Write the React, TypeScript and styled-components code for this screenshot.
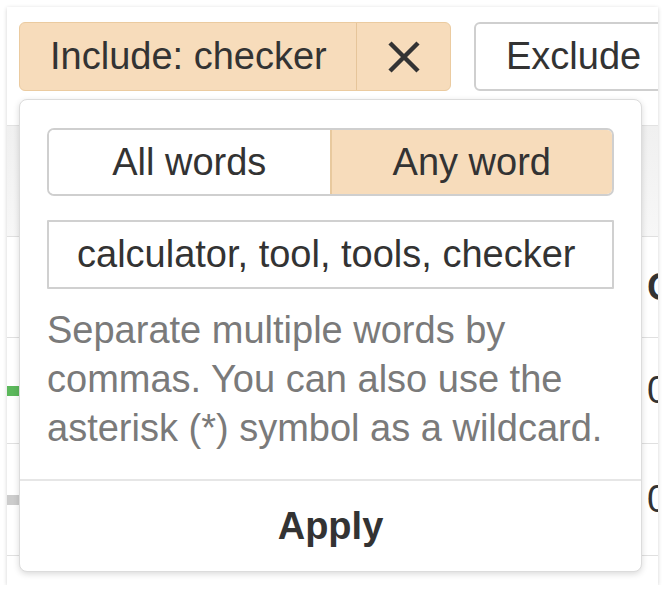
import styled, { createGlobalStyle } from "styled-components"

const GlobalStyle = createGlobalStyle`
   html, body {
      margin: 0;
      padding: 0;
      background: #ffffff;
   }
   body {
      font-family: "Liberation Sans", Arial, sans-serif;
      color: #333;
   }
`

interface Row {
   height: number
   bar?: string
   value: string
   bold?: boolean
}

const rows: Row[] = [
   { height: 100, value: "C", bold: true },
   { height: 105, bar: "#5cb85c", value: "0" },
   { height: 111, bar: "#cccccc", value: "0" },
   { height: 60, value: "" },
]

const App = () => {
   return (
      <>
         <GlobalStyle />
         <Card>
            <Toolbar>
               <SplitButton>
                  <SplitLabel>Include: checker</SplitLabel>
                  <SplitClose aria-label="Remove">
                     <svg width="34" height="34" viewBox="0 0 34 34">
                        <path d="M3 3 L31 31 M31 3 L3 31" stroke="#333" strokeWidth="4.5" fill="none" />
                     </svg>
                  </SplitClose>
               </SplitButton>
               <PlainButton>Exclude</PlainButton>
            </Toolbar>

            <Table>
               <HeaderRow />
               {rows.map((row, i) => (
                  <TableRow key={i} height={row.height}>
                     <BarCell>{row.bar && <Bar color={row.bar} />}</BarCell>
                     <ValueCell bold={row.bold}>{row.value}</ValueCell>
                  </TableRow>
               ))}
            </Table>

            <Popover>
               <PopoverBody>
                  <Segmented>
                     <Segment>All words</Segment>
                     <Segment active>Any word</Segment>
                  </Segmented>
                  <WordsInput defaultValue="calculator, tool, tools, checker" />
                  <Help>
                     Separate multiple words by commas. You can also use the asterisk (*) symbol as a wildcard.
                  </Help>
               </PopoverBody>
               <ApplyBar>
                  <ApplyButton>Apply</ApplyButton>
               </ApplyBar>
            </Popover>
         </Card>
      </>
   )
}

export default App

// Styled Components

const Card = styled.div`
   position: relative;
   margin: 7px 0 0 7px;
   width: 651px;
   height: 578px;
   overflow: hidden;
   background: #fff;
   box-shadow: 0 1px 4px rgba(0, 0, 0, 0.18);
`

const Toolbar = styled.div`
   display: flex;
   gap: 23px;
   padding: 15px 0 0 12px;
   white-space: nowrap;
`

const SplitButton = styled.div`
   display: flex;
   height: 69px;
   box-sizing: border-box;
   border: 1.5px solid #ebcba0;
   border-radius: 6px;
   background: #f7dcbb;
   flex-shrink: 0;
`

const SplitLabel = styled.button`
   width: 337px;
   box-sizing: border-box;
   padding: 0 0 0 30px;
   border: none;
   border-right: 1.5px solid #e6c59a;
   background: transparent;
   font: 38px "Liberation Sans", Arial, sans-serif;
   color: #333;
   text-align: left;
`

const SplitClose = styled.button`
   width: 93px;
   display: flex;
   align-items: center;
   justify-content: center;
   border: none;
   background: transparent;
   padding: 0;
`

const PlainButton = styled.button`
   height: 69px;
   box-sizing: border-box;
   padding: 0 30px;
   border: 2px solid #cfcfcf;
   border-radius: 6px;
   background: #fff;
   font: 38px "Liberation Sans", Arial, sans-serif;
   color: #333;
   flex-shrink: 0;
`

const Table = styled.div`
   margin-top: 34px;
   width: 700px;
`

const HeaderRow = styled.div`
   height: 110px;
   border-top: 1.5px solid #e2e2e2;
   background: linear-gradient(#f0f0f0, #f7f7f7);
`

const TableRow = styled.div<{ height: number }>`
   display: flex;
   align-items: center;
   height: ${({ height }) => height}px;
   border-top: 1.5px solid #e0e0e0;
`

const BarCell = styled.div`
   width: 640px;
   display: flex;
   align-items: center;
`

const Bar = styled.div<{ color: string }>`
   width: 120px;
   height: 10px;
   background: ${({ color }) => color};
`

const ValueCell = styled.div<{ bold?: boolean }>`
   font-size: 38px;
   font-weight: ${({ bold }) => (bold ? "bold" : "normal")};
   color: #333;
`

const Popover = styled.div`
   position: absolute;
   top: 92px;
   left: 12px;
   width: 623px;
   height: 473px;
   box-sizing: border-box;
   display: flex;
   flex-direction: column;
   background: #fff;
   border: 1.5px solid #dcdcdc;
   border-radius: 8px;
   box-shadow: 0 2px 6px rgba(0, 0, 0, 0.15);
`

const PopoverBody = styled.div`
   display: flex;
   flex-direction: column;
   padding: 28px 27px 26px 27px;
   border-bottom: 2px solid #e6e6e6;
`

const Segmented = styled.div`
   display: flex;
   height: 68px;
   box-sizing: border-box;
   border: 2px solid #cfcfcf;
   border-radius: 7px;
   overflow: hidden;
`

const Segment = styled.button<{ active?: boolean }>`
   flex: 1;
   border: none;
   ${({ active }) => (active ? "border-left: 2px solid #e8c99e;" : "")}
   background: ${({ active }) => (active ? "#f7dcbb" : "#fff")};
   font: 38px "Liberation Sans", Arial, sans-serif;
   color: #333;
   padding: 0;
`

const WordsInput = styled.input`
   margin-top: 24px;
   height: 69px;
   box-sizing: border-box;
   padding: 0 28px;
   border: 2px solid #d0d0d0;
   border-radius: 1px;
   font: 38px "Liberation Sans", Arial, sans-serif;
   color: #333;
   outline: none;
`

const Help = styled.p`
   margin: 17px 0 0;
   font-size: 38px;
   line-height: 49px;
   color: #7a7a7a;
`

const ApplyBar = styled.div`
   flex: 1;
   display: flex;
   align-items: center;
   justify-content: center;
`

const ApplyButton = styled.button`
   border: none;
   background: transparent;
   font: bold 38px "Liberation Sans", Arial, sans-serif;
   color: #333;
   padding: 0;
`
